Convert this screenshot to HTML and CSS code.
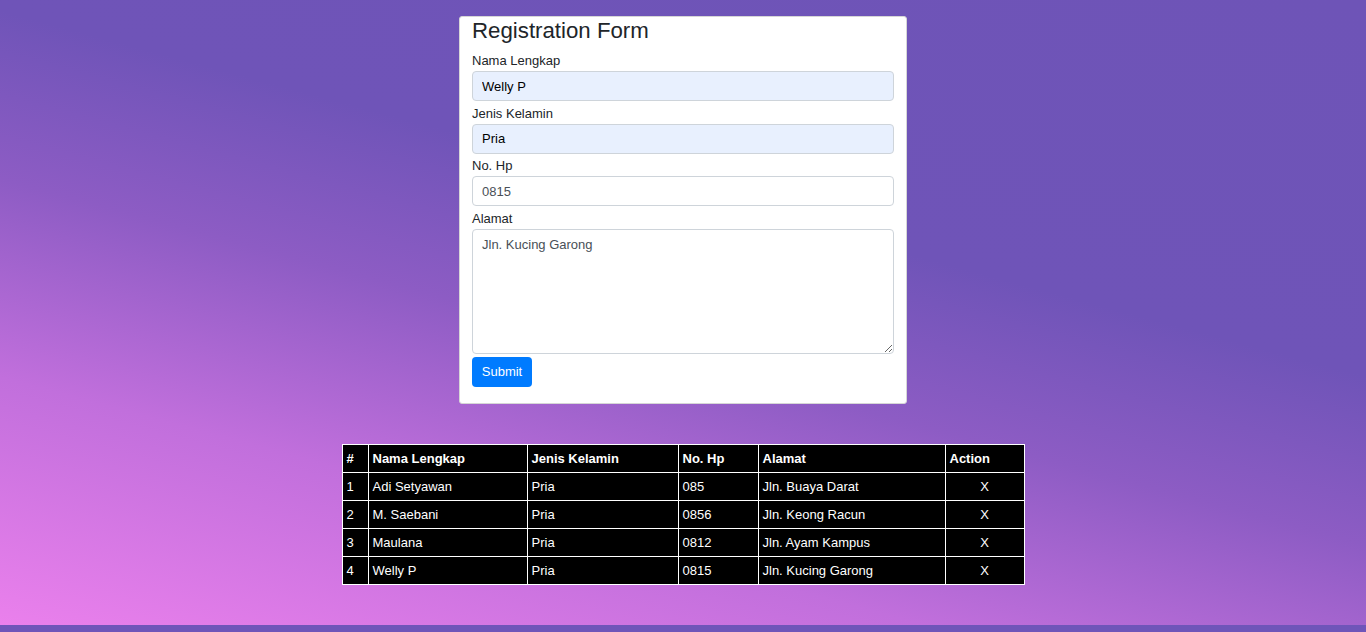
FILE: index.html
```html
<!DOCTYPE html>
<html lang="id">
<head>
<meta charset="utf-8">
<title>Registration Form</title>
<link rel="stylesheet" href="styles.css">
</head>
<body>
<div class="page">
  <form class="card">
    <h3 class="title">Registration Form</h3>
    <label class="label">Nama Lengkap</label>
    <input class="field autofill" type="text" value="Welly P">
    <label class="label">Jenis Kelamin</label>
    <input class="field autofill" type="text" value="Pria">
    <label class="label">No. Hp</label>
    <input class="field" type="text" value="0815">
    <label class="label">Alamat</label>
    <textarea class="field area" spellcheck="false">Jln. Kucing Garong</textarea>
    <button class="btn" type="button">Submit</button>
  </form>

  <table class="data">
    <colgroup>
      <col class="c1"><col class="c2"><col class="c3"><col class="c4"><col class="c5"><col class="c6">
    </colgroup>
    <thead>
      <tr><th>#</th><th>Nama Lengkap</th><th>Jenis Kelamin</th><th>No. Hp</th><th>Alamat</th><th>Action</th></tr>
    </thead>
    <tbody>
      <tr><td>1</td><td>Adi Setyawan</td><td>Pria</td><td>085</td><td>Jln. Buaya Darat</td><td class="act">X</td></tr>
      <tr><td>2</td><td>M. Saebani</td><td>Pria</td><td>0856</td><td>Jln. Keong Racun</td><td class="act">X</td></tr>
      <tr><td>3</td><td>Maulana</td><td>Pria</td><td>0812</td><td>Jln. Ayam Kampus</td><td class="act">X</td></tr>
      <tr><td>4</td><td>Welly P</td><td>Pria</td><td>0815</td><td>Jln. Kucing Garong</td><td class="act">X</td></tr>
    </tbody>
  </table>
</div>
</body>
</html>
```
FILE: styles.css
```css
html {
  background: #6f55b9;
}
body {
  margin: 0;
  font-family: "Liberation Sans", Arial, sans-serif;
  font-size: 13px;
  color: #212529;
}
.page {
  height: 625px;
  background: linear-gradient(15deg, #ea80ec 0%, #c16fdc 25%, #8d5cc4 45%, #6f54b8 62%, #6e54b7 100%);
  display: flex;
  flex-direction: column;
  align-items: center;
  padding-top: 16px;
  box-sizing: border-box;
}
.card {
  width: 448px;
  box-sizing: border-box;
  background: #fff;
  border: 1px solid #d6d6d6;
  border-radius: 3px;
  padding: 0 12px 16px;
  display: flex;
  flex-direction: column;
  align-items: flex-start;
}
.title {
  margin: 0 0 7px;
  font-size: 22.25px;
  font-weight: 400;
  line-height: 27px;
  height: 27px;
  color: #212529;
}
.label {
  display: block;
  line-height: 20px;
  height: 20px;
}
.field {
  display: block;
  width: 422px;
  height: 30px;
  box-sizing: border-box;
  border: 1px solid #ced4da;
  border-radius: 4px;
  padding: 0 9px;
  font-family: "Liberation Sans", Arial, sans-serif;
  font-size: 13px;
  color: #495057;
  background: #fff;
  margin: 0 0 2.67px;
  outline: none;
}
.autofill {
  background: #e8f0fe;
  color: #000;
}
.area {
  height: 125px;
  padding: 7px 9px;
  line-height: 16px;
  resize: vertical;
}
.btn {
  width: 60px;
  height: 30px;
  border: none;
  border-radius: 4px;
  background: #007bff;
  color: #fff;
  font-family: "Liberation Sans", Arial, sans-serif;
  font-size: 13px;
  padding: 0;
}
.data {
  margin-top: 40px;
  width: 682px;
  table-layout: fixed;
  border-collapse: collapse;
  background: #000;
  color: #fff;
  font-size: 13px;
}
.data th, .data td {
  border: 1px solid #fff;
  height: 28px;
  padding: 0 4px;
  text-align: left;
  box-sizing: border-box;
}
.data th {
  font-weight: 700;
}
.data td.act {
  text-align: center;
}
.c1 { width: 26px; }
.c2 { width: 159px; }
.c3 { width: 151px; }
.c4 { width: 80px; }
.c5 { width: 187px; }
.c6 { width: 79px; }
```
